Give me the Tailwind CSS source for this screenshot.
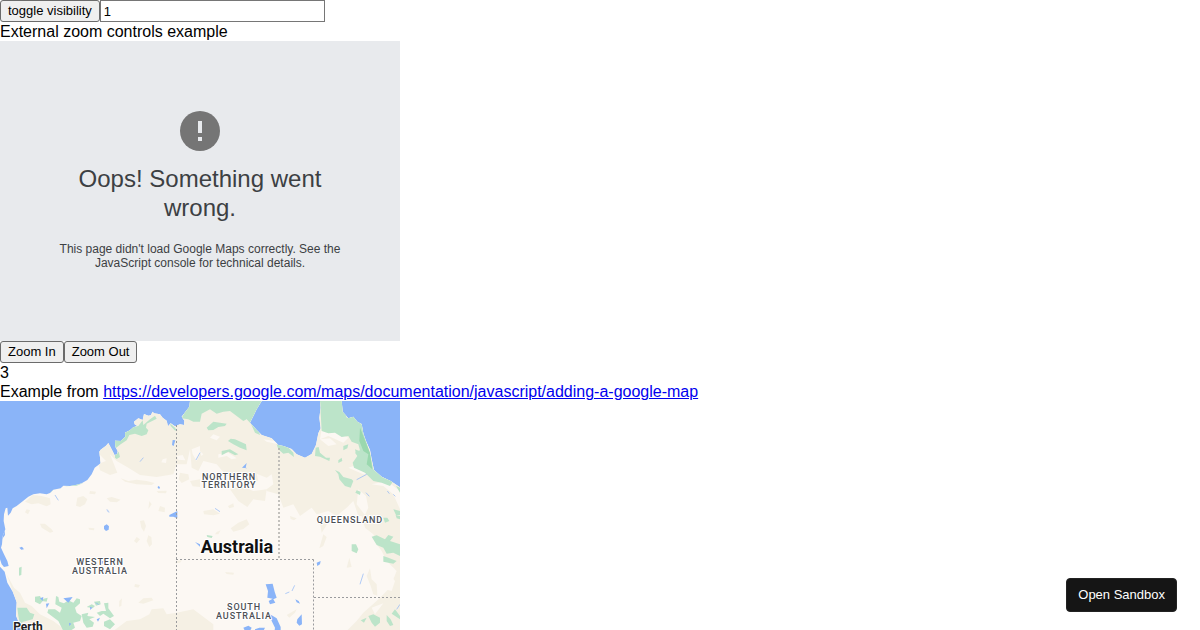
<!DOCTYPE html>
<html lang="en">
<head>
  <meta charset="UTF-8" />
  <meta name="viewport" content="width=device-width, initial-scale=1.0" />
  <title>Google Maps example</title>
  <script src="https://cdn.jsdelivr.net/npm/@tailwindcss/browser@4"></script>
</head>
<body class="bg-white text-black text-[16px] leading-[19px] font-['Helvetica','Liberation_Sans',sans-serif]">

  <div class="flex">
    <button type="button" class="h-[22px] px-[7px] border border-[#6b6b6b] rounded-[3px] bg-[#efefef] text-[13px] leading-5">toggle visibility</button>
    <input type="text" value="1" aria-label="Number of maps" class="h-[22px] w-[225px] px-[3px] border border-[#767676] bg-white text-[13px] leading-5" />
  </div>

  <div>External zoom controls example</div>

  <!-- map that failed to load -->
  <div class="w-[400px] h-[300px] px-[55px] pt-[70px] bg-[#e8eaed] text-[#3c4043] text-center">
    <svg class="mx-auto size-10" viewBox="0 0 40 40" aria-hidden="true">
      <circle cx="20" cy="20" r="20" fill="#757575" />
      <path d="M18 10h4v12h-4zM18 26h4v4h-4z" fill="#e8eaed" />
    </svg>
    <div class="mt-[13px] text-[24px] leading-[29px]">Oops! Something went wrong.</div>
    <div class="mt-5 text-[12px] leading-[14px]">This page didn't load Google Maps correctly. See the JavaScript console for technical details.</div>
  </div>

  <div class="flex">
    <button type="button" class="h-[22px] px-[7px] border border-[#6b6b6b] rounded-[3px] bg-[#efefef] text-[13px] leading-5">Zoom In</button>
    <button type="button" class="h-[22px] px-[7px] border border-[#6b6b6b] rounded-[3px] bg-[#efefef] text-[13px] leading-5">Zoom Out</button>
  </div>
  <div>3</div>
  <div>Example from <a href="https://developers.google.com/maps/documentation/javascript/adding-a-google-map" class="text-[#0000ee] underline">https://developers.google.com/maps/documentation/javascript/adding-a-google-map</a></div>

  <!-- Australia -->
  <div class="w-[400px] h-[300px] overflow-hidden bg-[#8ab4f8]">
    <svg class="block size-full" viewBox="0 0 400 300" role="img" aria-label="Map of Australia">
      <defs>
        <path id="coast" d="M0 497L14 512L22 545L38 572L50 604L48 645L60 672L70 700V900H1200V259L1172 240L1145 227L1122 207L1115 175L1110 147L1098 120L1090 97L1085 69L1072 62L1060 47L1045 52L1028 32L1025 0H960L962 20L958 50L962 82L955 97L948 132L935 159L915 170L890 160L875 144L850 135L835 132L815 112L785 102L770 87L750 65L770 25L785 0H570L568 17L545 47L553 59L552 72L540 70L525 76L512 67L504 76L500 59L488 50L480 40L462 37L458 32L452 43L445 44L432 39L428 57L415 52L402 62L404 70L412 75L400 79L390 88L375 95L376 107L362 120L345 119L346 137L353 150L352 158L344 163L335 145L325 126L318 134L302 146L298 152L302 187L284 200L275 220L262 237L245 247L230 251L210 255L190 254L182 262L160 266L150 276L140 280L120 277L100 280L85 287L70 299L50 315L38 322L32 335L24 344L22 320L17 322L12 340L11 360L16 385L8 405L6 430L3 440L12 460L22 480L26 495L12 498L5 490L0 475Z" />
        <clipPath id="land"><use href="#coast" /></clipPath>
      </defs>
      <g transform="scale(.33333)">
        <use href="#coast" fill="#fcf8f3" />
        <g clip-path="url(#land)">
          <!-- dry grassland -->
          <g fill="#f5f0e4">
            <path d="M290 130L345 110L400 40L570 0H1200V430L1190 400L1150 370L1110 345L1075 345L1060 300L1040 320L1010 345L985 330L950 340L935 320L900 345L880 310L850 320L835 280L800 270L790 235L750 245L720 215L680 225L650 190L610 180L595 210L575 200L570 145L560 190L530 190L520 220L470 228L420 222L385 200L350 180L330 160L352 215L330 222L300 208L295 185Z" />
            <path d="M75 302L98 282L125 285L150 292L152 310L140 316L115 307L95 310ZM362 232L385 240L410 236L440 240L464 246L455 252L410 250L375 242ZM80 325L90 328L84 340L75 334ZM232 290L250 285L262 295L255 310L240 318L228 314ZM270 270L288 272L285 280L268 278ZM320 292L335 288L362 296L350 304L330 302ZM470 270L500 269L498 277L475 276ZM448 300L455 310L445 324ZM480 315L495 320L494 334L475 330ZM540 215L565 220L568 235L545 246L536 235ZM570 240L600 235V258L578 256Z" />
            <path d="M120 368L135 368L155 385L160 392L150 395L125 380ZM265 380L283 382L282 388L268 386ZM420 360L432 358L438 375L432 392L424 380ZM410 408L420 415L410 427L402 420ZM445 403L454 408L456 430L448 438L440 420ZM405 549L420 552L415 560L403 557ZM358 600L366 592L364 615L357 617ZM415 605L430 592L455 590L460 598L430 608ZM530 480L546 478L540 485L524 487Z" />
            <path d="M20 520L42 560L60 575L75 605L95 615L120 640L160 660L200 690H60L48 640L48 600ZM340 690L380 660L420 655L448 640L455 625L490 622L500 640L530 635L580 625L600 640L640 670V700H340Z" />
            <path d="M690 265L720 255L760 270L800 265L795 300L760 295L742 318L715 300ZM610 330L640 325L660 338L640 343L612 340ZM715 365L740 355L748 370L730 384L700 392L692 382ZM684 315L700 307L702 318L688 322ZM650 393L662 388L655 400L645 400ZM675 513L702 515L700 521L680 519ZM960 365L985 350L980 372L965 395ZM870 345L890 352L882 358L872 354ZM970 400L980 408L970 435L958 442ZM860 642L890 625L885 635L868 650Z" />
            <path d="M1085 345L1200 320V690H1040L1070 660L1090 635L1130 600L1170 560L1190 510L1160 480L1145 450L1130 430L1120 400L1095 380ZM1100 525L1110 502L1115 535L1130 550L1132 584L1120 580L1112 555ZM1040 500L1048 470L1055 498Z" />
          </g>
          <!-- bare patches within the grassland -->
          <g fill="#fcf8f3">
            <path d="M1135 500L1160 510L1185 540L1175 570L1140 560L1128 530ZM1115 620L1150 607L1125 640ZM575 145L600 135V158L590 180L578 160ZM488 175L500 172L498 186L484 184ZM530 165L548 162L556 178L535 176ZM298 160L318 180L302 186ZM600 150L610 160L604 165ZM655 160L685 155L710 172L695 175L680 165L655 170ZM770 218L800 230L815 220L820 250L800 265L780 260ZM965 85L1000 90L1045 110L1030 125L985 105L960 115ZM960 115L990 112L1010 130L985 135ZM1075 265L1098 285L1105 320L1095 342L1070 310ZM1045 200L1090 185L1115 215L1090 220ZM1115 250L1150 255L1180 280L1200 325V270L1160 240ZM640 100L660 107L650 118L630 110Z" />
            <path d="M700 20L740 30L750 60L720 50ZM625 75L645 65L640 80ZM790 115L825 120L835 130L800 122ZM575 40L590 35L595 42L580 48Z" />
          </g>
          <!-- forest -->
          <g fill="#bce4c9">
            <path d="M345 118L376 107L372 95L400 77L415 75L428 58L430 72L450 55L465 44L470 53L440 68L438 80L445 88L440 100L425 105L405 98L388 102L380 118L362 130L345 143ZM345 162L356 152L360 168L350 174L345 170ZM510 67L525 80L532 90L524 88L512 75ZM150 269L162 264L152 275ZM195 256L250 246L230 254Z" />
            <path d="M570 0H785L770 28L750 65L740 55L730 60L690 30L670 32L650 38L630 25L605 38L600 62H580L565 55L545 52ZM750 62L775 85L780 102L765 95ZM620 80L640 62L680 68L675 75L655 78L640 87L625 88ZM692 113L705 115L738 130L740 148L720 140L700 130L684 120ZM665 150L690 145L715 160L705 163L685 152L665 163ZM785 35L795 30L794 45L782 45ZM860 125L880 122L895 127L882 133ZM830 130L860 135L880 155L882 168L865 155L850 158L835 145Z" />
            <path d="M960 0H1028L1040 50L1060 47L1085 70L1095 110L1110 160L1120 205L1150 230L1180 240L1170 255L1145 245L1120 240L1095 215L1062 200L1058 185L1072 165L1065 155L1080 148L1075 130L1055 122L1045 105L1025 108L1005 95L985 97L965 90ZM947 140L956 138L960 155L978 170L990 170L988 180L960 167L945 165ZM1030 135L1045 130L1042 142L1030 148ZM1015 178L1025 170L1027 180L1015 186ZM1005 207L1018 213L1030 228L1055 235L1060 240L1052 260L1035 255L1018 235L1015 220ZM1070 268L1082 272L1080 282L1066 275ZM1065 145L1078 150L1068 160ZM1188 255L1200 260V275ZM1180 325L1200 330V342H1188Z" />
            <path d="M57 500L65 497L64 522L57 524ZM105 587L120 585L128 600L120 610L105 602ZM125 595L143 590L140 602L126 600ZM168 585L175 588L178 602L192 607L205 598L220 605L230 592L240 595L240 607L225 620L230 635L245 645L240 660L220 665L225 680L210 690H190L175 660L142 635L145 625L165 625L180 635L185 620L166 610ZM52 620L80 620L90 635L103 640L98 655L70 662L60 670L55 645ZM260 618L275 610L285 615L278 622ZM282 602L300 600L302 610L288 614ZM312 607L325 605L325 622L342 645L330 652L310 638L300 645L290 635L305 630L318 630ZM245 640L265 635L262 645L285 648L268 655L282 665L278 677L260 680L250 665ZM312 662L330 655L345 670L330 685L312 675Z" />
            <path d="M620 402L638 405L635 411L622 408ZM1150 350L1162 350L1168 360L1155 365ZM1187 342L1200 345V355L1190 352ZM1055 430L1068 430L1075 445L1070 457L1055 450ZM1115 407L1130 403L1155 415L1165 402L1180 407L1170 420L1200 430V465L1180 455L1160 458L1150 440L1130 432ZM1150 465L1165 470L1190 480L1180 488L1150 482ZM1105 645L1120 640L1140 650L1140 665L1125 677L1115 665ZM1082 658L1100 650L1092 665ZM1160 642L1172 655L1180 672L1170 675L1160 660ZM1185 625L1200 645V655L1175 638Z" />
          </g>
          <path fill="#9ad8ae" d="M1080 80L1088 100L1110 155L1117 205L1100 190L1105 160L1090 150L1078 120Z" />
          <!-- lakes -->
          <g fill="#8ab4f8">
            <path d="M518 117L526 118L521 135L516 132ZM508 342L532 330V352L520 347L508 347ZM474 255L480 258L478 264L473 261ZM318 325L328 335L324 333ZM726 200L740 186L737 200L744 202ZM312 375L320 370L327 376L326 386L318 390L312 384ZM58 440L66 437L72 445L64 446ZM8 395L14 388L15 402L6 415ZM190 592L218 588L205 605ZM120 592L130 588L128 600ZM138 608L148 607L140 622ZM270 617L277 620L271 627ZM285 603L300 612L292 610ZM290 655L300 650L294 662ZM207 665L214 668L208 675ZM302 480L310 480L308 488L302 487ZM508 342H532V347H508ZM585 423L600 430V437Z" />
            <path d="M797 550L818 548L824 572L830 590L820 595L826 605L810 610L806 600L818 593L802 590L804 570ZM886 595L896 600L900 608L890 604ZM892 655L905 640L906 670L898 674L890 665ZM810 640L830 652L842 678V700H822L825 680L815 660ZM730 680L745 674L755 680L750 690H735ZM765 685L778 680L795 680L790 690H765ZM950 485L962 480L960 490L952 495Z" />
          </g>
          <g fill="none" stroke="#8ab4f8" stroke-width="2">
            <path d="M165 282L175 298M420 182L430 170M588 177L600 155M320 325L328 333M645 322L660 332M856 578L868 573M876 570L884 553M1070 236L1100 220M1098 275L1108 286M1162 270L1168 278M1180 280L1186 286M1080 550L1090 518M1190 625L1200 610" />
          </g>
        </g>
      </g>

      <!-- state borders -->
      <g fill="none" stroke="#9a9b9d" stroke-width="1" stroke-dasharray="2 2">
        <path d="M176.500 24V300M176 158.500H313.500M313.500 158.500V300M314 196.500H400" />
        <path stroke="#b5b3b0" stroke-width="1.600" d="M279 47V158" />
      </g>

      <g class="font-['Roboto',sans-serif]" text-anchor="middle" stroke="#fff" stroke-width="2" stroke-linejoin="round" paint-order="stroke">
        <g class="text-[9px] font-medium tracking-widest" fill="#4c4f54">
          <text x="229" y="79">NORTHERN</text>
          <text x="229" y="87">TERRITORY</text>
          <text x="350" y="122">QUEENSLAND</text>
          <text x="100" y="164">WESTERN</text>
          <text x="100" y="173">AUSTRALIA</text>
          <text x="244" y="209">SOUTH</text>
          <text x="244" y="218">AUSTRALIA</text>
        </g>
        <text class="text-[18px] font-bold" x="237" y="152" fill="#111">Australia</text>
        <text class="text-[12px] font-bold" x="28" y="230" fill="#222">Perth</text>
      </g>
    </svg>
  </div>

  <button type="button" class="fixed right-[23px] bottom-[18px] h-[34px] px-[11px] rounded-[4px] border border-[#222] bg-[#151515] text-white text-[13px] leading-4">Open Sandbox</button>

</body>
</html>
